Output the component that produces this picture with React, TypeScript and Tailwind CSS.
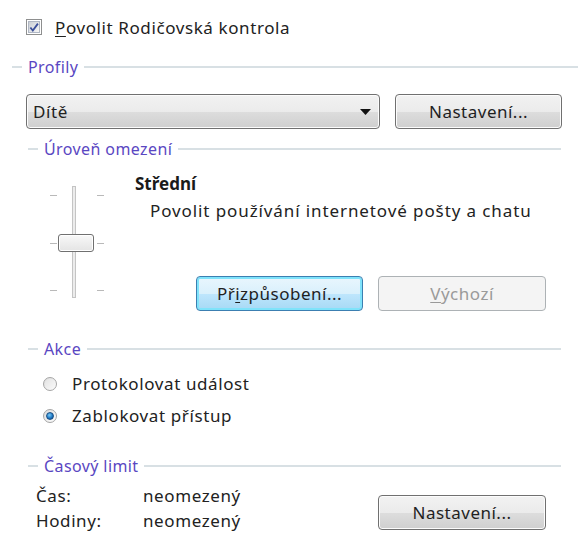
import React from 'react';

const font = { fontFamily: '"Noto Sans", "Open Sans", sans-serif' };

function GroupHeader({ title, dash = 10 }: { title: string; dash?: number }) {
  return (
    <div className="flex h-[20px] items-center">
      <div className="h-[2px] bg-[#d8e0e4]" style={{ width: dash }} />
      <span className="px-[6px] text-[16px] leading-none tracking-[0.4px] text-[#5a47c2]">{title}</span>
      <div className="h-[2px] flex-1 bg-[#d8e0e4]" />
    </div>
  );
}

function Button({
  children,
  variant = 'normal',
  className = '',
}: {
  children: React.ReactNode;
  variant?: 'normal' | 'default' | 'disabled';
  className?: string;
}) {
  const look =
    variant === 'default'
      ? 'border-[#3c7fb1] bg-[linear-gradient(#e9f6fd_0%,#d9f0fc_50%,#bee6fd_51%,#a7d9f5_100%)] text-[#1f1f1f] shadow-[inset_0_0_0_2px_#7fe3fb]'
      : variant === 'disabled'
        ? 'border-[#adb2b5] bg-[#f4f4f4] text-[#9a9a9a]'
        : 'border-[#707070] bg-[linear-gradient(#f2f2f2_0%,#ebebeb_50%,#dddddd_51%,#cfcfcf_100%)] text-[#1f1f1f] shadow-[inset_0_0_0_1px_#fcfcfc]';
  return (
    <div
      className={`flex h-[35px] items-center justify-center rounded-[4px] border text-[17px] tracking-[0.5px] ${look} ${className}`}
    >
      {children}
    </div>
  );
}

function Checkbox() {
  return (
    <div className="flex h-[16px] w-[16px] items-center justify-center border border-[#8e8f8f] bg-white">
      <div className="flex h-[12px] w-[12px] items-center justify-center border border-[#b0b7c4] bg-[linear-gradient(135deg,#cbcfd5,#f6f6f6)]">
        <svg width="11" height="11" viewBox="0 0 11 11">
          <path d="M1.5 5.5 L4.2 8.8 L9.8 1.2" fill="none" stroke="#3b4f9a" strokeWidth="2" />
        </svg>
      </div>
    </div>
  );
}

function Radio({ checked }: { checked?: boolean }) {
  return (
    <div className="flex h-[14px] w-[14px] items-center justify-center rounded-full border border-[#a5a5a5] bg-[linear-gradient(135deg,#dcdcdc,#ffffff)]">
      {checked ? (
        <div className="h-[8px] w-[8px] rounded-full border border-[#1b4f83] bg-[radial-gradient(circle_at_40%_35%,#7ccbf5_0%,#1f7ac7_55%,#0b3f7a_100%)]" />
      ) : (
        <div className="h-[10px] w-[10px] rounded-full bg-[linear-gradient(135deg,#e4e4e4,#f8f8f8)]" />
      )}
    </div>
  );
}

function Slider() {
  const tick = 'h-[1px] w-[7px] bg-[#b9b9b9]';
  return (
    <div className="relative h-[112px] w-[54px]">
      <div className="absolute left-[22px] top-0 h-[112px] w-[4px] border border-[#c4c4c4] bg-[#ececec]" />
      <div className={`absolute left-0 top-[9px] ${tick}`} />
      <div className={`absolute right-0 top-[9px] ${tick}`} />
      <div className={`absolute left-0 top-[57px] ${tick}`} />
      <div className={`absolute right-0 top-[57px] ${tick}`} />
      <div className={`absolute left-0 top-[104px] ${tick}`} />
      <div className={`absolute right-0 top-[104px] ${tick}`} />
      <div className="absolute left-[8px] top-[48px] h-[18px] w-[36px] rounded-[3px] border border-[#707070] bg-[linear-gradient(#f8f8f8,#e4e4e4)] shadow-[inset_0_0_0_1px_#ffffff]" />
    </div>
  );
}

export default function App() {
  return (
    <div className="h-[551px] w-[582px] bg-white pt-[19px] text-[17px] tracking-[0.6px] text-[#222]" style={font}>
      {/* top checkbox */}
      <div className="ml-[26px] flex h-[16px] items-center gap-[13px]">
        <Checkbox />
        <span className="leading-none">
          <span className="underline underline-offset-2">P</span>ovolit Rodičovská kontrola
        </span>
      </div>

      {/* Profily */}
      <div className="ml-[12px] mr-[4px] mt-[22px]">
        <GroupHeader title="Profily" />
      </div>
      <div className="ml-[26px] mr-[20px] mt-[17px] flex items-center">
        <div className="flex h-[35px] w-[354px] items-center justify-between rounded-[4px] border border-[#707070] bg-[linear-gradient(#f2f2f2_0%,#ebebeb_50%,#dddddd_51%,#cfcfcf_100%)] pl-[6px] pr-[8px] shadow-[inset_0_0_0_1px_#fcfcfc]">
          <span>Dítě</span>
          <svg width="11" height="6" viewBox="0 0 11 6">
            <path d="M0 0 H11 L5.5 6 Z" fill="#111" />
          </svg>
        </div>
        <Button className="ml-[15px] flex-1">Nastavení...</Button>
      </div>

      {/* inner groups */}
      <div className="ml-[28px] w-[533px]">
        <div className="mt-[10px]">
          <GroupHeader title="Úroveň omezení" />
        </div>
        <div className="flex items-start">
          <div className="ml-[22px] mt-[27px]">
            <Slider />
          </div>
          <div className="ml-[31px] mt-[15px] flex flex-col">
            <div className="flex h-[20px] items-center font-bold tracking-normal text-[#1a1a1a]">Střední</div>
            <div className="ml-[15px] mt-[7px] flex h-[20px] items-center whitespace-nowrap tracking-[0.9px]">
              Povolit používání internetové pošty a chatu
            </div>
            <div className="ml-[61px] mt-[55px] flex gap-[15px]">
              <Button variant="default" className="w-[167px]">
                <span>
                  Př<span className="underline underline-offset-2">i</span>způsobení...
                </span>
              </Button>
              <Button variant="disabled" className="w-[168px]">
                <span>
                  <span className="underline underline-offset-2">V</span>ýchozí
                </span>
              </Button>
            </div>
          </div>
        </div>

        <div className="mt-[28px]">
          <GroupHeader title="Akce" />
        </div>
        <div className="ml-[15px] mt-[15px] flex h-[20px] items-center gap-[15px]">
          <Radio />
          <span>Protokolovat událost</span>
        </div>
        <div className="ml-[15px] mt-[12px] flex h-[20px] items-center gap-[15px]">
          <Radio checked />
          <span>Zablokovat přístup</span>
        </div>

        <div className="mt-[30px]">
          <GroupHeader title="Časový limit" />
        </div>
        <div className="flex items-start">
          <div className="ml-[8px] mt-[10px] grid grid-cols-[107px_auto] gap-y-[5px]">
            <div className="flex h-[20px] items-center">Čas:</div>
            <div className="flex h-[20px] items-center">neomezený</div>
            <div className="flex h-[20px] items-center">Hodiny:</div>
            <div className="flex h-[20px] items-center">neomezený</div>
          </div>
          <Button className="ml-auto mr-[15px] mt-[19px] w-[168px]">Nastavení...</Button>
        </div>
      </div>
    </div>
  );
}
